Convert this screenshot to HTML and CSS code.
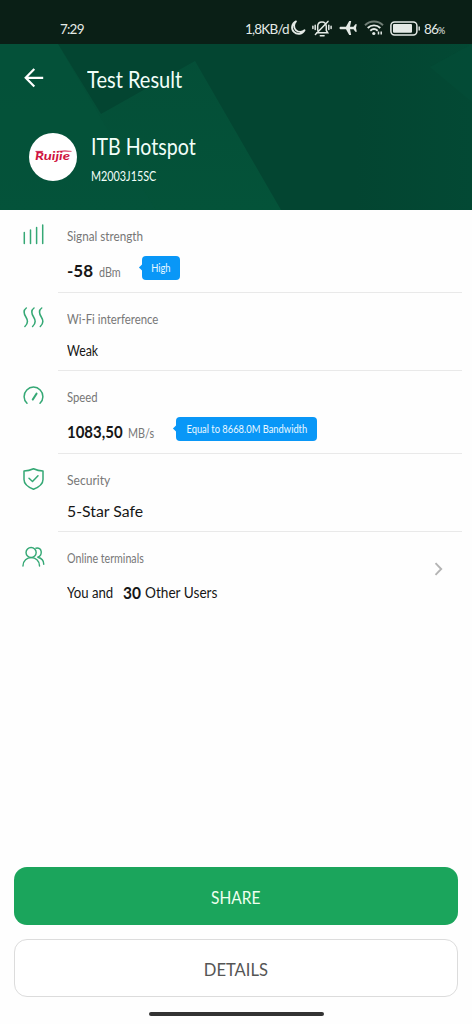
FILE: index.html
```html
<!DOCTYPE html>
<html lang="en">
<head>
<meta charset="utf-8">
<title>Test Result</title>
<link rel="stylesheet" href="styles.css">
</head>
<body>
<div class="screen">
  <div class="statusbar">
    <span class="clock">7:29</span>
    <div class="status-items">
      <span class="rate">1,8KB/d</span>
      <svg class="moon" width="16" height="16" viewBox="0 0 16 16"><path d="M6 1.3A6.6 6.6 0 1 0 14.6 10.2A6 6 0 0 1 6 1.3Z" fill="none" stroke="#e4eae6" stroke-width="1.8" stroke-linejoin="round"/></svg>
      <svg class="bell" width="20" height="17" viewBox="0 0 20 17" fill="none" stroke="#e4eae6" stroke-width="1.5" stroke-linecap="round"><path d="M4.7 12.8H15.7L14.3 10.5V6.5C14.3 3.7 12.5 2 10 2S5.7 3.7 5.7 6.5V10.2M8.3 15.7h3.8M16 1.4 3.4 14.5M3.2 5.2v4.3M.9 6.3v2.3M16.8 5.2v4.3M19.1 6.3v2.3"/></svg>
      <svg class="plane" width="18" height="16" viewBox="0 0 18 16"><path d="M.5 8C.5 7.1 1.1 6.7 2 6.7H7L10.2 1h2L11 6.7H14.5L16.3 4.3H17.800L17 8l.8 3.700H16.3l-1.800-2.400H11L12.200 15H10.200L7 9.300H2C1.1 9.300.5 8.900.5 8Z" fill="#e4eae6"/></svg>
      <svg class="wifi" width="20" height="16" viewBox="0 0 20 16" fill="none" stroke-width="1.900"><path d="M1 5.200C6 .3 14 .3 19 5.200" stroke="#6f7d75"/><path d="M3.700 8C7.300 4.500 12.700 4.500 16.300 8M6.300 10.800c2.200-2 5.200-2 7.400 0" stroke="#e4eae6"/><circle cx="9.800" cy="13.500" r="1.600" fill="#e4eae6"/><path d="M14.500 11.500v3M17.200 11.500v3" stroke="#e4eae6" stroke-width="1.500"/></svg>
      <svg class="battery" width="30" height="15" viewBox="0 0 30 15"><rect x=".9" y=".9" width="26" height="13" rx="3.600" fill="none" stroke="#e4eae6" stroke-width="1.500"/><rect x="3" y="3" width="19" height="8.800" rx="1" fill="#e4eae6"/><path d="M29.200 5.400v4" stroke="#e4eae6" stroke-width="1.400"/></svg>
      <span class="percent">86<small>%</small></span>
    </div>
  </div>
  <header class="hero">
    <svg class="hero-art" viewBox="0 0 472 166" preserveAspectRatio="none">
      <defs>
        <linearGradient id="base" x1="0" y1="0" x2="1" y2="0"><stop offset="0" stop-color="#034531"/><stop offset=".75" stop-color="#034531"/><stop offset="1" stop-color="#034934"/></linearGradient>
        <linearGradient id="block" x1="0" y1="0" x2="0" y2="1"><stop offset="0" stop-color="#044e37"/><stop offset="1" stop-color="#045339"/></linearGradient>
      </defs>
      <path d="M0 0H472V166H0Z" fill="url(#base)"/>
      <path d="M0 0H58L101 70L195 17L281 166H0Z" fill="url(#block)"/>
      <path d="M0 0H58L110 90L156 166H0Z" fill="#05533a" opacity=".65"/>
      <path d="M430 23L472 0V58Z" fill="#045039" opacity=".4"/>
    </svg>
    <div class="toolbar">
      <svg width="20" height="20" viewBox="0 0 20 20" fill="none" stroke="#fff" stroke-width="2.200"><path d="M10.300 1 1.700 9.800l8.600 8.700M1.700 9.800H19.200"/></svg>
      <h1>Test Result</h1>
    </div>
    <div class="network">
      <div class="logo"><svg width="38" height="16" viewBox="0 0 38 16"><text x="1" y="11" textLength="35" lengthAdjust="spacingAndGlyphs">Ruijie</text><path d="M1.500 2.300H9L8 3.300H2.500ZM24 2.400Q31 .9 37.500 2.400Q31 2 24 2.400Z"/></svg></div>
      <div class="network-text"><h2>ITB Hotspot</h2><p>M2003J15SC</p></div>
    </div>
  </header>
  <main class="results">
    <section class="row tall">
      <svg class="icon" viewBox="0 0 23 22"><path d="M2.300 8.500V19.500M8.500 6V19.500M14.600 3.500V19.500M20.700 1V19.500"/></svg>
      <div class="body"><h3 class="l-signal">Signal strength</h3><div class="value"><b class="n58">-58</b><span class="unit dbm">dBm</span><span class="badge b-high"><span>High</span></span></div></div>
    </section>
    <section class="row">
      <svg class="icon" viewBox="0 0 23 22"><path d="M4.300 1C1.500 3 1.700 6.500 3.900 10S5.800 17 2.900 19.500M12 1C9.200 3 9.400 6.500 11.600 10S13.500 17 10.600 19.500M19.700 1C16.900 3 17.100 6.500 19.300 10S21.200 17 18.300 19.500"/></svg>
      <div class="body"><h3 class="l-wifi">Wi-Fi interference</h3><div class="value"><span class="weak">Weak</span></div></div>
    </section>
    <section class="row tall">
      <svg class="icon" viewBox="0 0 23 22"><path d="M5 18.300A9.400 9.400 0 1 1 18 18.300"/><path d="M10.800 14.500 14.500 8.700" stroke-width="2.100"/></svg>
      <div class="body"><h3 class="l-speed">Speed</h3><div class="value"><b class="n1083">1083,50</b><span class="unit mbs">MB/s</span><span class="badge b-equal"><span>Equal to 8668.0M Bandwidth</span></span></div></div>
    </section>
    <section class="row">
      <svg class="icon" viewBox="0 0 22 22"><path d="M11 .8Q15.500 2.900 20.500 2.900V11.500C20.500 17 15.500 19.500 11 21.300C6.500 19.500 1.500 17 1.500 11.500V2.900Q6.500 2.900 11 .8Z"/><path d="M6.500 10.200 10 13.500 15.500 7.800"/></svg>
      <div class="body"><h3 class="l-sec">Security</h3><div class="value"><span class="star">5-Star Safe</span></div></div>
    </section>
    <section class="row last">
      <svg class="icon" viewBox="0 0 24 22"><circle cx="9.500" cy="6.300" r="5.300"/><path d="M1 20.300C1 8.800 18.300 8.800 18.300 20.300M14.500 1.800C21 .3 22 9 16.500 11.300C20.500 12.300 22.700 15 22.700 18.500"/></svg>
      <div class="body"><h3 class="l-online">Online terminals</h3><div class="value"><span class="you">You and</span><b class="n30">30</b><span class="users">Other Users</span></div></div>
      <svg class="chevron" width="9" height="14" viewBox="0 0 9 14"><path d="M1.500 1.200 7.200 7 1.500 12.800" fill="none" stroke="#b4b4b4" stroke-width="1.900"/></svg>
    </section>
  </main>
  <footer class="actions">
    <button class="btn share"><span>SHARE</span></button>
    <button class="btn details"><span>DETAILS</span></button>
    <div class="home"></div>
  </footer>
</div>
</body>
</html>
```
FILE: styles.css
```css
* { box-sizing: border-box; }
body { margin: 0; background: #fefefe; font-family: Lato, sans-serif; color: #161616; }
h1, h2, h3, p { margin: 0; font-weight: 400; }
.screen { width: 472px; height: 1024px; display: flex; flex-direction: column; background: #fefefe; overflow: hidden; }
.statusbar { height: 44px; flex: none; background: #0a1f16; color: #e4eae6; display: flex; align-items: center; justify-content: space-between; padding: 12px 25px 0 60px; font-size: 13.500px; white-space: nowrap; }
.clock { letter-spacing: -.8px; padding-top: 1px; }
.status-items { display: flex; align-items: center; width: 202px; flex: none; }
.status-items svg { flex: none; }
.rate { width: 45px; flex: none; letter-spacing: -.8px; padding-top: 1px; }
.bell { margin-left: 6px; }
.plane { margin-left: 7px; }
.wifi { margin-left: 7px; }
.battery { margin-left: 6px; }
.percent { margin-left: 4px; letter-spacing: -.8px; padding-top: 1px; }
.percent small { font-size: 9px; }

.hero { height: 166px; flex: none; position: relative; background: #034a34; color: #f2fff9; }
.hero-art { position: absolute; inset: 0; width: 100%; height: 100%; }
.toolbar { position: relative; display: flex; align-items: center; height: 70px; padding: 0 0 2px 24px; gap: 43px; }
.toolbar h1 { font-size: 22.500px; line-height: 28px; padding-top: 4px; transform: scaleX(.89); transform-origin: left; }
.network { position: relative; display: flex; padding: 19px 0 0 29px; gap: 14px; }
.logo { width: 48px; height: 48px; border-radius: 50%; background: #fff; display: flex; align-items: center; justify-content: center; }
.logo text { font: italic 700 12px Lato, sans-serif; fill: #cf1240; }
.logo path { fill: #cf1240; stroke: #cf1240; stroke-width: .4; }
.network h2 { font-size: 22.500px; line-height: 28px; transform: scaleX(.87); transform-origin: left; }
.network p { font-size: 13.500px; line-height: 18px; margin-top: 6px; transform: scaleX(.8); transform-origin: left; }

.row { height: 78px; display: flex; padding-left: 22px; position: relative; }
.row.tall { height: 83px; }
.icon { width: 23px; height: 22px; margin-top: 14px; flex: none; fill: none; stroke: #35a875; stroke-width: 1.500; stroke-linecap: round; stroke-linejoin: round; }
.body { margin: 0 10px 0 13px; padding: 17px 0 0 9px; flex: 1; border-bottom: 1.500px solid #e9e9e9; }
.last .body { border: 0; }
.body h3 { font-size: 13px; line-height: 18px; color: #777; width: max-content; transform-origin: left; }
.value { height: 28px; margin-top: 8px; display: flex; align-items: center; font-size: 15.500px; white-space: nowrap; }
.tall .value, .last .value { margin-top: 11px; }
.value b, .value > span { transform-origin: left; }
.value b { font-weight: 700; font-size: 17px; }
.value .unit { font-size: 13.500px; color: #777; margin-left: 5px; padding-top: 3px; }

/* Label widths */
.l-signal { transform: scaleX(.9); }
.l-wifi { transform: scaleX(.875); }
.l-speed { transform: scaleX(.87); }
.l-sec { transform: scaleX(.93); }
.l-online { transform: scaleX(.82); }
.n58 { width: 27px; }
.dbm { width: 43px; transform: scaleX(.8); }
.n1083 { width: 56px; transform: scaleX(.88); }
.mbs { width: 48px; transform: scaleX(.8); }
.weak { transform: scaleX(.8); }
.star { transform: scaleX(1.02); }
.you { width: 56px; transform: scaleX(.85); }
.n30 { width: 22px; transform: scaleX(.91); }
.users { transform: scaleX(.88); }

.badge { height: 24px; border-radius: 4px; background: #0997f7; color: #e9f8ff; font-size: 10.500px; display: flex; align-items: center; justify-content: center; position: relative; margin-top: -5px; }
.badge::before { content: ""; position: absolute; left: -2px; top: 9px; width: 5px; height: 5px; background: #0997f7; transform: rotate(45deg); }
.badge span { transform: scaleX(.89); }
.b-high { width: 38px; }
.b-equal { width: 141px; }
.chevron { position: absolute; left: 434px; top: 30px; }

.actions { margin-top: auto; height: 157px; padding: 0 14px; display: flex; flex-direction: column; align-items: center; }
.btn { width: 444px; height: 58px; flex: none; border-radius: 13px; font: 400 18px Lato, sans-serif; padding: 2px 0 0; border: 0; }
.btn span { display: inline-block; }
.share { background: #1ba55c; color: #efffef; }
.share span { transform: scaleX(.86); }
.details { margin-top: 14px; padding-top: 1px; background: #fff; color: #555; border: 1.500px solid #dcdcdc; }
.details span { transform: scaleX(.92); }
.home { width: 175px; height: 4px; border-radius: 2px; background: #333; margin-top: 15px; }
```
